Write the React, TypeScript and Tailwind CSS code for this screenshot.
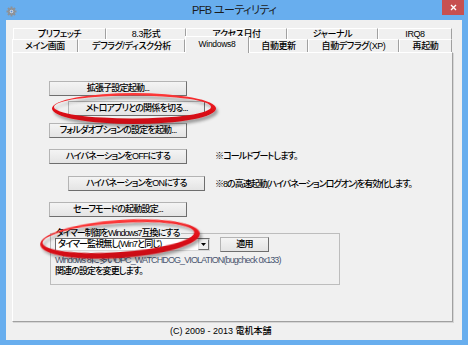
import React from "react";

const FONT =
  "font-['Liberation_Sans','Noto_Sans_CJK_JP',sans-serif] [font-feature-settings:'palt']";

function Btn({
  children,
  className = "",
}: {
  children: React.ReactNode;
  className?: string;
}) {
  return (
    <div
      className={`h-[15px] shrink-0 flex items-center justify-center bg-gradient-to-b from-[#f4f4f4] to-[#e4e4e4] border border-t-[#b4b4b4] border-l-[#b4b4b4] border-r-[#6e6e6e] border-b-[#6e6e6e] text-[9px] leading-none tracking-[-0.8px] text-black whitespace-nowrap ${className}`}
    >
      {children}
    </div>
  );
}

function Tab({
  label,
  w,
  selected = false,
}: {
  label: string;
  w: string;
  selected?: boolean;
}) {
  if (selected) {
    return (
      <div
        className={`${w} relative z-10 h-[17px] -mb-[1px] shrink-0 flex items-start justify-center pt-[2px] bg-[#f0f0f0] border-t border-l border-r border-t-white border-l-white border-r-[#a0a0a0] text-[8.5px] leading-[10px] tracking-[-0.3px] text-black whitespace-nowrap`}
      >
        {label}
      </div>
    );
  }
  return (
    <div
      className={`${w} h-full shrink-0 flex items-center justify-center border-t border-l border-r border-t-white border-l-white border-r-[#a0a0a0] text-[9px] leading-none tracking-[-0.4px] text-black whitespace-nowrap`}
    >
      {label}
    </div>
  );
}

export default function App() {
  return (
    <div
      className={`relative w-[468px] h-[345px] overflow-hidden bg-[#68aeee] flex flex-col font-medium ${FONT}`}
    >
      {/* Title bar */}
      <div className="h-[20px] shrink-0 grid grid-cols-[1fr_auto_1fr]">
        <div className="flex items-start pt-[6px] pl-[6px]">
          <svg width="11" height="11" viewBox="0 0 22 22">
            <g fill="#8d9298">
              {[0, 45, 90, 135, 180, 225, 270, 315].map((a) => (
                <rect
                  key={a}
                  x="9"
                  y="1"
                  width="4"
                  height="5"
                  transform={`rotate(${a} 11 11)`}
                />
              ))}
              <circle cx="11" cy="11" r="7" />
            </g>
            <circle cx="11" cy="11" r="3.5" fill="#dfe6ee" />
            <circle cx="11" cy="11" r="2" fill="#5b8fcf" />
          </svg>
        </div>
        <div className="flex items-center justify-center text-[11px] font-normal leading-none tracking-[-0.6px] text-[#1a1a1a] pt-[1px]">
          PFB ユーティリティ
        </div>
        <div className="flex justify-end items-start pr-[4px]">
          <div className="w-[22px] h-[15px] bg-[#c75050] flex items-center justify-center">
            <svg width="7" height="7" viewBox="0 0 7 7">
              <path
                d="M1 1 L6 6 M6 1 L1 6"
                stroke="#ffffff"
                strokeWidth="1.4"
              />
            </svg>
          </div>
        </div>
      </div>

      {/* Client area */}
      <div className="mx-[6px] h-[320px] shrink-0 bg-[#f0f0f0] flex flex-col">
        <div className="ml-[6px] mt-[8px] w-[441px] flex flex-col">
          {/* Tab header row 1 */}
          <div className="h-[11px] flex ml-[1px]">
            <Tab label="プリフェッチ" w="w-[93px]" />
            <Tab label="8.3形式" w="w-[80px]" />
            <Tab label="アクセス日付" w="w-[101px]" />
            <Tab label="ジャーナル" w="w-[91px]" />
            <Tab label="IRQ8" w="w-[74px]" />
          </div>
          {/* Tab header row 2 */}
          <div className="h-[13px] flex items-end">
            <Tab label="メイン画面" w="w-[66px]" />
            <Tab label="デフラグ/ディスク分析" w="w-[107px]" />
            <Tab label="Windows8" w="w-[64px]" selected />
            <Tab label="自動更新" w="w-[59px]" />
            <Tab label="自動デフラグ(XP)" w="w-[91px]" />
            <Tab label="再起動" w="w-[53px]" />
          </div>

          {/* Panel */}
          <div className="h-[270px] border border-t-white border-l-white border-r-[#a0a0a0] border-b-[#a0a0a0] shadow-[1px_1px_0_#d6d6d6] pl-[36px] flex flex-col items-start text-[9px] tracking-[-0.9px]">
            <Btn className="mt-[28px] w-[138px]">拡張子設定起動...</Btn>
            <Btn className="mt-[5px] ml-[19px] w-[137px]">
              メトロアプリとの関係を切る...
            </Btn>
            <Btn className="mt-[7px] w-[138px]">
              フォルダオプションの設定を起動...
            </Btn>
            <div className="mt-[11px] flex items-center">
              <Btn className="w-[138px]">ハイバネーションをOFFにする</Btn>
              <span className="ml-[28px] text-[9px] leading-none text-black">
                ※コールドブートします。
              </span>
            </div>
            <div className="mt-[12px] ml-[19px] flex items-center">
              <Btn className="w-[137px]">ハイバネーションをONにする</Btn>
              <span className="ml-[10px] mt-[2px] text-[9px] leading-none tracking-[-1px] text-black">
                ※8の高速起動(ハイバネーションログオン)を有効化します。
              </span>
            </div>
            <Btn className="mt-[11px] w-[138px]">セーフモードの起動設定...</Btn>

            <fieldset className="mt-[12px] ml-[1px] w-[290px] h-[56px] border border-[#bdbdbd] pl-[4px] pr-0 pb-0 pt-0 m-0">
              <legend className="px-[1px] text-[9px] leading-[8px] tracking-[-1px] text-black">
                タイマー制御をWindows7互換にする
              </legend>
              <div className="h-[15px] flex items-center">
                <div className="w-[155px] h-[13px] bg-white border border-t-[#6d6d6d] border-l-[#6d6d6d] border-r-[#d8d8d8] border-b-[#d8d8d8] flex items-center">
                  <span className="flex-1 pl-[2px] text-[9px] leading-none text-black whitespace-nowrap">
                    タイマー監視無し(Win7と同じ)
                  </span>
                  <div className="w-[11px] h-[11px] bg-[#eeeeee] border border-t-[#e0e0e0] border-l-[#e0e0e0] border-r-[#6e6e6e] border-b-[#6e6e6e] flex items-center justify-center">
                    <svg width="5" height="3" viewBox="0 0 5 3">
                      <path d="M0 0 H5 L2.5 3 Z" fill="#000" />
                    </svg>
                  </div>
                </div>
                <Btn className="ml-[10px] w-[49px]">適用</Btn>
              </div>
              <div className="mt-[3px] text-[9px] leading-[11px] whitespace-nowrap">
                <div className="text-[#4a5670]">
                  Windows 8に多いDPC_WATCHDOG_VIOLATION(bugcheck 0x133)
                </div>
                <div className="text-black">関連の設定を変更します。</div>
              </div>
            </fieldset>
          </div>
        </div>

        {/* Footer */}
        <div className="flex-1 flex items-center justify-start pl-[164px] text-[9px] leading-none text-black">
          (C) 2009 - 2013 電机本舗
        </div>
      </div>

      {/* Red highlight ellipses overlay */}
      <svg
        className="absolute inset-0 pointer-events-none"
        width="468"
        height="345"
        viewBox="0 0 468 345"
      >
        <defs>
          <filter id="sh" x="-10%" y="-50%" width="120%" height="200%">
            <feDropShadow
              dx="2"
              dy="3"
              stdDeviation="1.6"
              floodColor="#000"
              floodOpacity="0.35"
            />
          </filter>
          <linearGradient id="rg" x1="0" y1="0" x2="0" y2="1">
            <stop offset="0" stopColor="#ff3b3b" />
            <stop offset="0.5" stopColor="#e3121a" />
            <stop offset="1" stopColor="#c80d14" />
          </linearGradient>
        </defs>
        <path
          filter="url(#sh)"
          fill="url(#rg)"
          fillRule="evenodd"
          d="M52 108.5 a82 15.5 0 1 0 164 0 a82 15.5 0 1 0 -164 0 Z M54 107 a78.5 11.5 0 1 0 157 0 a78.5 11.5 0 1 0 -157 0 Z"
        />
        <g transform="rotate(-4 120 239)">
          <path
            filter="url(#sh)"
            fill="url(#rg)"
            fillRule="evenodd"
            d="M40 239 a80 19 0 1 0 160 0 a80 19 0 1 0 -160 0 Z M42.5 237.5 a76 14.5 0 1 0 152 0 a76 14.5 0 1 0 -152 0 Z"
          />
        </g>
      </svg>
    </div>
  );
}
